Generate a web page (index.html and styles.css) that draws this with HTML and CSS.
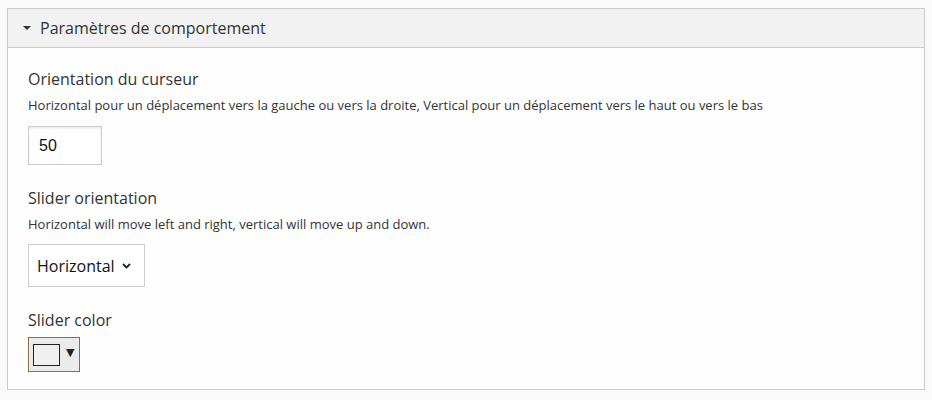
FILE: index.html
```html
<!DOCTYPE html>
<html lang="fr">
<head>
    <meta charset="UTF-8">
    <meta name="viewport" content="width=device-width, initial-scale=1.0">
    <title>Paramètres de comportement</title>
    <link rel="stylesheet" href="styles.css">
</head>
<body>
    <div class="panel">
        <div class="panel-header">
            <span class="caret"></span>
            <span class="panel-title">Paramètres de comportement</span>
        </div>
        <div class="panel-body">
            <div class="form-item">
                <label class="form-label" for="orientation">Orientation du curseur</label>
                <div class="form-desc">Horizontal pour un déplacement vers la gauche ou vers la droite, Vertical pour un déplacement vers le haut ou vers le bas</div>
                <input type="text" id="orientation" class="text-input" value="50">
            </div>
            <div class="form-item">
                <label class="form-label">Slider orientation</label>
                <div class="form-desc">Horizontal will move left and right, vertical will move up and down.</div>
                <div class="select-box">
                    <span>Horizontal</span>
                    <svg class="chevron" width="9" height="6" viewBox="0 0 9 6">
                        <path d="M1 1 L4.5 4.5 L8 1" fill="none" stroke="#222" stroke-width="1.8"/>
                    </svg>
                </div>
            </div>
            <div class="form-item last">
                <label class="form-label">Slider color</label>
                <div class="color-picker">
                    <span class="swatch"></span>
                    <span class="arrow">&#9660;</span>
                </div>
            </div>
        </div>
    </div>
</body>
</html>
```

FILE: styles.css
```css
body {
    margin: 0;
    background: #fafafa;
    font-family: "Open Sans", sans-serif;
    color: #333;
}
.panel {
    margin: 8px 7px;
    border: 1px solid #ccc;
    background: #fefefe;
}
.panel-header {
    display: flex;
    align-items: center;
    height: 38px;
    padding-left: 15px;
    background: #f2f2f2;
    border-bottom: 1px solid #ccc;
}
.caret {
    width: 0;
    height: 0;
    border-left: 4px solid transparent;
    border-right: 4px solid transparent;
    border-top: 4px solid #333;
    margin-right: 9px;
}
.panel-title {
    font-size: 16px;
    line-height: 20px;
}
.panel-body {
    padding: 21px 20px 17px;
}
.form-item {
    margin-bottom: 23px;
}
.form-item.last {
    margin-bottom: 0;
}
.form-label {
    display: block;
    font-size: 16px;
    line-height: 20px;
}
.form-desc {
    font-size: 13px;
    line-height: 18px;
    margin-top: 7px;
    margin-bottom: 12px;
}
.text-input {
    box-sizing: border-box;
    width: 74px;
    height: 39px;
    padding: 0 10px;
    border: 1px solid #ccc;
    box-shadow: inset 0 1px 3px rgba(0, 0, 0, 0.1);
    font-family: "Liberation Sans", Arial, sans-serif;
    font-size: 16px;
    color: #111;
    margin: 0;
}
.select-box {
    box-sizing: border-box;
    display: flex;
    align-items: center;
    width: 117px;
    height: 43px;
    padding: 0 13px 0 8px;
    justify-content: space-between;
    border: 1px solid #ccc;
    font-size: 16px;
    color: #111;
    background: #fff;
    margin-top: -1px;
}
.color-picker {
    box-sizing: border-box;
    display: flex;
    align-items: center;
    width: 52px;
    height: 35px;
    margin-top: 7px;
    padding: 0 4px;
    border: 1px solid #8b6d4d;
    background: #ebebeb;
}
.swatch {
    box-sizing: border-box;
    width: 27px;
    height: 22px;
    border: 1px solid #222;
    background: #f0f0f0;
}
.arrow {
    font-family: "DejaVu Sans", sans-serif;
    font-size: 11px;
    color: #222;
    margin-left: 6px;
    margin-top: -4px;
}
```
